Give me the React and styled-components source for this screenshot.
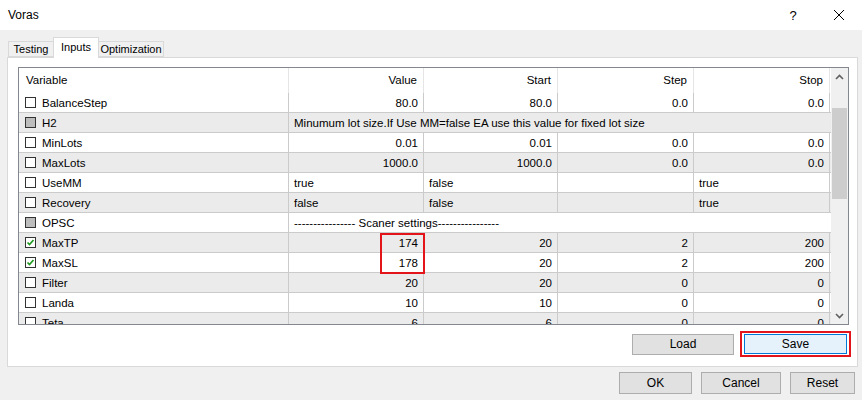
import React from 'react';
import styled, { createGlobalStyle } from 'styled-components';

const GlobalStyle = createGlobalStyle`
  html, body {
    margin: 0;
    padding: 0;
    background: #f0f0f0;
  }
  body {
    font-family: "Liberation Sans", Arial, sans-serif;
    color: #000;
  }
`;

const Window = styled.div`
  width: 862px;
  height: 400px;
  background: #f0f0f0;
  display: flex;
  flex-direction: column;
  overflow: hidden;
`;

const TitleBar = styled.div`
  height: 30px;
  background: #fff;
  display: flex;
  align-items: center;
  padding-left: 8px;
  font-size: 12px;
`;

const TitleText = styled.span`
  flex: 1;
`;

const TitleButton = styled.button`
  width: 46px;
  height: 30px;
  border: none;
  background: transparent;
  display: flex;
  align-items: center;
  justify-content: center;
  font-family: inherit;
  font-size: 13px;
  padding: 0;
  color: #000;
`;

const Body = styled.div`
  padding: 7px 4px 0 7px;
`;

const TabStrip = styled.div`
  display: flex;
  align-items: flex-end;
  height: 20px;
  padding-left: 1px;
`;

const Tab = styled.div`
  width: ${p => p.$w}px;
  height: ${p => (p.$active ? '21px' : '16px')};
  margin-bottom: ${p => (p.$active ? '-1px' : '0')};
  display: flex;
  justify-content: center;
  align-items: ${p => (p.$active ? 'flex-start' : 'center')};
  padding-top: ${p => (p.$active ? '3px' : '0')};
  box-sizing: border-box;
  background: ${p => (p.$active ? '#fff' : '#f0f0f0')};
  border: 1px solid #d9d9d9;
  border-bottom: ${p => (p.$active ? 'none' : '1px solid #d9d9d9')};
  margin-left: ${p => (p.$first ? '0' : '-1px')};
  font-size: 11px;
  white-space: nowrap;
  position: relative;
  z-index: ${p => (p.$active ? 1 : 0)};
`;

const Panel = styled.div`
  width: 851px;
  height: 310px;
  box-sizing: border-box;
  background: #fff;
  border: 1px solid #d9d9d9;
  padding: 9px 9px 0 10px;
  display: flex;
  flex-direction: column;
`;

const ListView = styled.div`
  position: relative;
  width: 831px;
  height: 258px;
  box-sizing: border-box;
  border: 1px solid #828790;
  display: flex;
  background: #fff;
`;

const Grid = styled.div`
  flex: 1;
  overflow: hidden;
  font-size: 11.5px;
`;

const COLS = '270px 135px 134px 136px 136px';

const HeaderRow = styled.div`
  display: grid;
  grid-template-columns: ${COLS};
  height: 25px;
`;

const HeaderCell = styled.div`
  display: flex;
  align-items: center;
  justify-content: ${p => (p.$left ? 'flex-start' : 'flex-end')};
  padding: 0 6px 1px 7px;
  border-right: 1px solid #e5e5e5;
`;

const Row = styled.div`
  display: grid;
  grid-template-columns: ${COLS};
  height: 20px;
  box-sizing: border-box;
  border-bottom: 1px solid #cbcbcb;
  background: ${p => (p.$shade ? '#ebebeb' : '#fff')};
`;

const NameCell = styled.div`
  display: flex;
  align-items: center;
  gap: 6px;
  padding-left: 6px;
  border-right: 1px solid #cbcbcb;
  white-space: nowrap;
`;

const Cell = styled.div`
  display: flex;
  align-items: center;
  justify-content: ${p => (p.$left ? 'flex-start' : 'flex-end')};
  padding: 0 5px;
  border-right: 1px solid #cbcbcb;
  white-space: nowrap;
  overflow: hidden;
`;

const NoteCell = styled(Cell)`
  grid-column: 2 / -1;
  justify-content: flex-start;
  border-right: none;
`;

const Box = styled.span`
  width: 11px;
  height: 11px;
  flex: none;
  box-sizing: border-box;
  border: 1px solid #333;
  background: ${p => (p.$state === 'gray' ? '#bdbdbd' : '#fff')};
  display: flex;
  align-items: center;
  justify-content: center;
`;

const ScrollBar = styled.div`
  width: 17px;
  flex: none;
  background: #f0f0f0;
  display: flex;
  flex-direction: column;
  align-items: center;
`;

const ScrollArrow = styled.div`
  height: 17px;
  width: 17px;
  display: flex;
  align-items: center;
  justify-content: center;
`;

const ScrollTrack = styled.div`
  flex: 1;
  width: 100%;
  display: flex;
  justify-content: center;
`;

const ScrollThumb = styled.div`
  margin-top: 23px;
  width: 15px;
  height: 91px;
  background: #cdcdcd;
`;

const Highlight = styled.div`
  position: absolute;
  left: 361px;
  top: 165px;
  width: 45px;
  height: 41px;
  box-sizing: border-box;
  border: 2px solid #e3151a;
  pointer-events: none;
`;

const PanelActions = styled.div`
  display: flex;
  justify-content: flex-end;
  align-items: center;
  gap: 6px;
  margin: 6px -3px 0 0;
`;

const Button = styled.button`
  width: ${p => p.$w}px;
  height: ${p => p.$h || 21}px;
  box-sizing: border-box;
  background: ${p => (p.$focus ? '#e5f1fb' : '#e1e1e1')};
  border: 1px solid ${p => (p.$focus ? '#0078d7' : '#adadad')};
  font-family: "Liberation Sans", Arial, sans-serif;
  font-size: 12px;
  color: #000;
  padding: 0;
  display: flex;
  align-items: center;
  justify-content: center;
`;

const RedFrame = styled.div`
  border: 2px solid #e3151a;
  padding: 1px 2px;
  display: flex;
`;

const Footer = styled.div`
  display: flex;
  justify-content: flex-end;
  gap: 9px;
  padding: 5px 3px 0 0;
`;

const Chevron = ({ up }) => (
  <svg width="9" height="6" viewBox="0 0 9 6">
    <path
      d={up ? 'M1 5 L4.5 1.5 L8 5' : 'M1 1 L4.5 4.5 L8 1'}
      fill="none"
      stroke="#606060"
      strokeWidth="1.6"
    />
  </svg>
);

const CheckBox = ({ state }) => (
  <Box $state={state}>
    {state === 'on' && (
      <svg width="9" height="9" viewBox="0 0 9 9">
        <path d="M1.5 4.5 L3.5 6.5 L7.5 2" fill="none" stroke="#1f9a1f" strokeWidth="1.7" />
      </svg>
    )}
  </Box>
);

const rows = [
  { name: 'BalanceStep', values: ['80.0', '80.0', '0.0', '0.0'] },
  { name: 'H2', state: 'gray', note: 'Minumum lot size.If Use MM=false EA use this value for fixed lot size' },
  { name: 'MinLots', values: ['0.01', '0.01', '0.0', '0.0'] },
  { name: 'MaxLots', values: ['1000.0', '1000.0', '0.0', '0.0'] },
  { name: 'UseMM', left: true, values: ['true', 'false', '', 'true'] },
  { name: 'Recovery', left: true, values: ['false', 'false', '', 'true'] },
  { name: 'OPSC', state: 'gray', note: '---------------- Scaner settings----------------' },
  { name: 'MaxTP', state: 'on', values: ['174', '20', '2', '200'] },
  { name: 'MaxSL', state: 'on', values: ['178', '20', '2', '200'] },
  { name: 'Filter', values: ['20', '20', '0', '0'] },
  { name: 'Landa', values: ['10', '10', '0', '0'] },
  { name: 'Teta', values: ['6', '6', '0', '0'] },
];

const App = () => (
  <Window>
    <GlobalStyle />
    <TitleBar>
      <TitleText>Voras</TitleText>
      <TitleButton>?</TitleButton>
      <TitleButton>
        <svg width="12" height="12" viewBox="0 0 12 12">
          <path d="M1 1 L11 11 M11 1 L1 11" stroke="#000" strokeWidth="1" />
        </svg>
      </TitleButton>
    </TitleBar>

    <Body>
      <TabStrip>
        <Tab $w={46} $first>Testing</Tab>
        <Tab $w={46} $active>Inputs</Tab>
        <Tab $w={66}>Optimization</Tab>
      </TabStrip>

      <Panel>
        <ListView>
          <Grid>
            <HeaderRow>
              <HeaderCell $left>Variable</HeaderCell>
              <HeaderCell>Value</HeaderCell>
              <HeaderCell>Start</HeaderCell>
              <HeaderCell>Step</HeaderCell>
              <HeaderCell>Stop</HeaderCell>
            </HeaderRow>
            {rows.map((r, i) => (
              <Row key={r.name} $shade={i % 2 === 1}>
                <NameCell>
                  <CheckBox state={r.state || 'off'} />
                  {r.name}
                </NameCell>
                {r.note ? (
                  <NoteCell>{r.note}</NoteCell>
                ) : (
                  r.values.map((v, j) => (
                    <Cell key={j} $left={r.left}>{v}</Cell>
                  ))
                )}
              </Row>
            ))}
          </Grid>
          <ScrollBar>
            <ScrollArrow><Chevron up /></ScrollArrow>
            <ScrollTrack><ScrollThumb /></ScrollTrack>
            <ScrollArrow><Chevron /></ScrollArrow>
          </ScrollBar>
          <Highlight />
        </ListView>

        <PanelActions>
          <Button $w={102}>Load</Button>
          <RedFrame>
            <Button $w={103} $h={20} $focus>Save</Button>
          </RedFrame>
        </PanelActions>
      </Panel>

      <Footer>
        <Button $w={73} $h={22}>OK</Button>
        <Button $w={80} $h={22}>Cancel</Button>
        <Button $w={65} $h={22}>Reset</Button>
      </Footer>
    </Body>
  </Window>
);

export default App;
